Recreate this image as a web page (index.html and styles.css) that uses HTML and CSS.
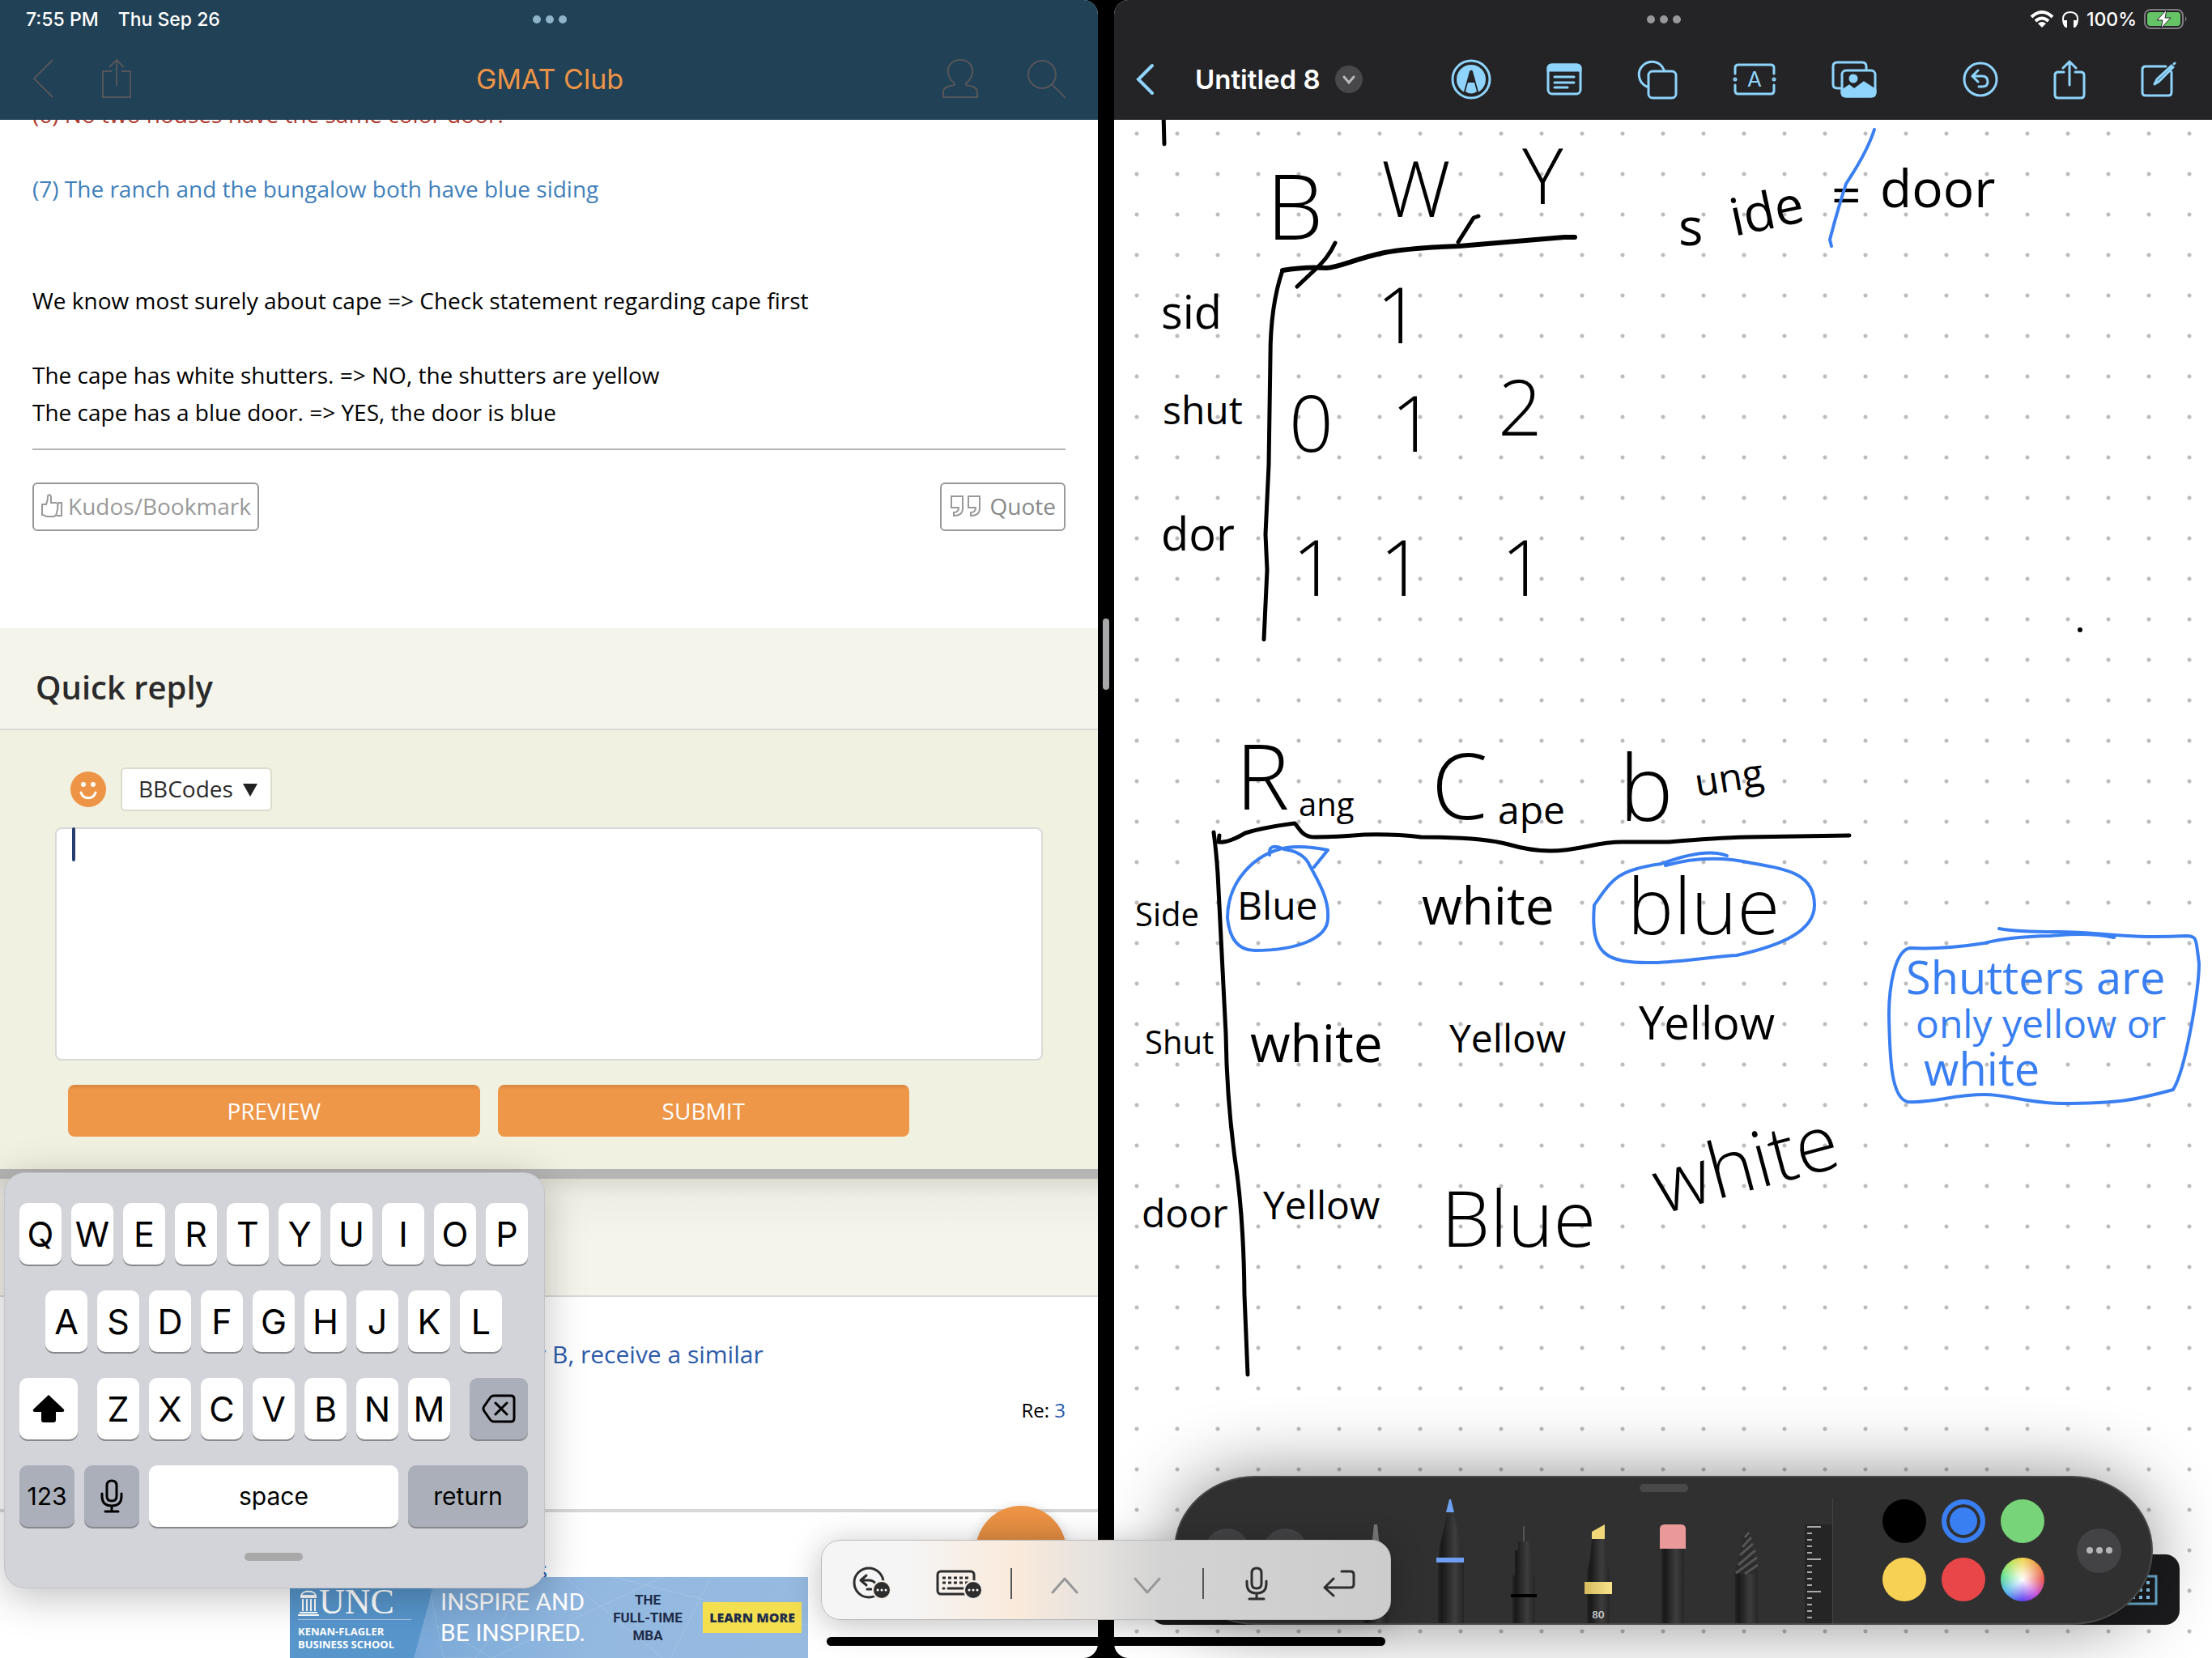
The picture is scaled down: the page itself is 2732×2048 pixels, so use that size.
FILE: index.html
```html
<!DOCTYPE html>
<html lang="en">
<head>
    <meta charset="UTF-8">
    <meta name="viewport" content="width=device-width, initial-scale=1.0">
    <title>GMAT Club</title>
    <link rel="stylesheet" href="styles.css">
</head>
<body>
    <section class="pane forum">
        <header class="bar forum-bar">
            <div class="status">
                <span class="status-left"><span>7:55 PM</span><span>Thu Sep 26</span></span>
                <span class="dots"><i></i><i></i><i></i></span>
                <span></span>
            </div>
            <nav class="forum-nav">
                <div class="nav-group">
                    <button class="icon-btn" aria-label="Back"><svg width="26" height="50" viewBox="0 0 26 50"><path d="M25 2L2 25L25 48"/></svg></button>
                    <button class="icon-btn" aria-label="Share"><svg width="36" height="50" viewBox="0 0 36 50"><path d="M12 16H1V48H35V16H24M18 34V2M9 11L18 2L27 11"/></svg></button>
                </div>
                <h1>GMAT Club</h1>
                <div class="nav-group nav-right">
                    <button class="icon-btn" aria-label="Profile"><svg width="44" height="50" viewBox="0 0 44 50"><path d="M22 2C11 2 6 10 7 18C8 25 11 28 15 31C18 35 2 32 1 41V48H43V41C42 32 26 35 29 31C33 28 36 25 37 18C38 10 33 2 22 2Z"/></svg></button>
                    <button class="icon-btn" aria-label="Search"><svg width="50" height="50" viewBox="0 0 50 50"><circle cx="19" cy="20" r="17"/><path d="M31 32L48 49"/></svg></button>
                </div>
            </nav>
        </header>

        <main class="thread">
            <article class="post">
                <p class="red">(6) No two houses have the same color door.</p>
                <p class="blue">(7) The ranch and the bungalow both have blue siding</p>
                <p class="lead">We know most surely about cape =&gt; Check statement regarding cape first</p>
                <p>The cape has white shutters. =&gt; NO, the shutters are yellow<br>The cape has a blue door. =&gt; YES, the door is blue</p>
                <hr>
                <div class="post-actions">
                    <button class="outline-btn"><svg width="28" height="30" viewBox="0 0 28 30"><path d="M2 13H7C9 9 9 7 9 3C9 0 13 1 13 4V11H19C22 11 22 14 21 15C22 17 21 18 21 19C21 21 20 22 20 23C20 27 18 28 15 28H8C6 28 5 26 2 26ZM22 11H26V27H20"/></svg>Kudos/Bookmark</button>
                    <button class="outline-btn quote"><svg width="40" height="28" viewBox="0 0 40 28"><path d="M2 2H16V17C16 23 12 26 5 26V22C9 22 11 20 11 16H2ZM23 2H37V17C37 23 33 26 26 26V22C30 22 32 20 32 16H23Z"/></svg>Quote</button>
                </div>
            </article>

            <section class="reply">
                <h2>Quick reply</h2>
                <form class="reply-form">
                    <div class="reply-tools">
                        <button type="button" class="smiley" aria-label="Smileys"><svg width="44" height="44" viewBox="0 0 44 44"><circle cx="22" cy="22" r="22" fill="#ee9446"/><circle cx="16" cy="16" r="3" fill="#fff"/><circle cx="28" cy="16" r="3" fill="#fff"/><path d="M13 26C16 35 28 35 31 26" fill="none" stroke="#fff" stroke-width="3" stroke-linecap="round"/></svg></button>
                        <div class="select-wrap">
                            <select aria-label="BBCodes"><option>BBCodes</option></select>
                            <svg class="arrow" width="18" height="16" viewBox="0 0 18 16"><path d="M0 0H18L9 16Z" fill="#222"/></svg>
                        </div>
                    </div>
                    <div class="message">
                        <textarea aria-label="Message"></textarea>
                        <span class="caret"></span>
                    </div>
                    <div class="reply-buttons">
                        <button type="button" class="orange-btn">PREVIEW</button>
                        <button type="submit" class="orange-btn">SUBMIT</button>
                    </div>
                </form>
            </section>

            <section class="similar">
                <div class="similar-head"></div>
                <div class="topic">
                    <a href="#">r B, receive a similar</a>
                    <div class="replies">Re: <a href="#">3</a></div>
                </div>
                <div class="topic last"><a href="#">s</a></div>
            </section>
        </main>

        <button class="fab" aria-label="New post"></button>

        <aside class="ad">
            <svg class="ad-lines" viewBox="0 0 640 100" preserveAspectRatio="none"><path d="M170 0L190 100L230 100L300 0ZM340 0L460 100M460 0L250 100M400 0L640 60M520 0L470 100M180 60L250 100" /></svg>
            <div class="ad-school">
                <div class="ad-logo"><svg width="26" height="34" viewBox="0 0 26 34"><path d="M4 9C5 2 21 2 22 9ZM3 11H23M6 13V28M11 13V28M16 13V28M21 13V28M2 30H24M0 33H26" fill="none" stroke="#fff" stroke-width="2"/></svg><b>UNC</b></div>
                <span>KENAN-FLAGLER<br>BUSINESS SCHOOL</span>
            </div>
            <div class="ad-slogan">INSPIRE AND<br>BE INSPIRED.</div>
            <div class="ad-mba">THE<br>FULL-TIME<br>MBA</div>
            <a class="ad-more" href="#">LEARN MORE</a>
        </aside>

        <div class="keyboard">
            <div class="keys"><button>Q</button><button>W</button><button>E</button><button>R</button><button>T</button><button>Y</button><button>U</button><button>I</button><button>O</button><button>P</button></div>
            <div class="keys"><button>A</button><button>S</button><button>D</button><button>F</button><button>G</button><button>H</button><button>J</button><button>K</button><button>L</button></div>
            <div class="keys spread">
                <button class="wide" aria-label="Shift"><svg width="40" height="36" viewBox="0 0 40 36"><path d="M20 1L39 19Q40 22 37 22H29V32Q29 35 26 35H14Q11 35 11 32V22H3Q0 22 1 19Z"/></svg></button>
                <span class="keys"><button>Z</button><button>X</button><button>C</button><button>V</button><button>B</button><button>N</button><button>M</button></span>
                <button class="wide grey" aria-label="Delete"><svg width="42" height="36" viewBox="0 0 42 36"><path d="M15 2H36Q40 2 40 6V30Q40 34 36 34H15Q12 34 10 31L3 21Q1 18 3 15L10 5Q12 2 15 2ZM17 11L31 25M31 11L17 25" fill="none" stroke="#000" stroke-width="3" stroke-linecap="round"/></svg></button>
            </div>
            <div class="keys">
                <button class="fn grey">123</button>
                <button class="fn grey" aria-label="Dictate"><svg width="28" height="42" viewBox="0 0 28 42"><path d="M14 2Q20 2 20 8V21Q20 27 14 27Q8 27 8 21V8Q8 2 14 2ZM2 18V21Q2 33 14 33Q26 33 26 21V18M14 33V40M6 40H22" fill="none" stroke="#000" stroke-width="3" stroke-linecap="round"/></svg></button>
                <button class="word space">space</button>
                <button class="word return grey">return</button>
            </div>
            <span class="grip"></span>
        </div>
    </section>

    <div class="divider"><span></span></div>

    <section class="pane notes">
        <header class="bar notes-bar">
            <div class="status">
                <span></span>
                <span class="dots"><i></i><i></i><i></i></span>
                <span class="status-right">
                    <svg width="30" height="22" viewBox="0 0 30 22"><path d="M2 8Q15 -4 28 8M7 13Q15 6 23 13" fill="none" stroke="#fff" stroke-width="4"/><path d="M10 16Q15 12 20 16L15 21Z" fill="#fff"/></svg>
                    <svg width="22" height="22" viewBox="0 0 22 22"><path d="M4 18Q2 15 2 11Q2 2 11 2Q20 2 20 11Q20 15 18 18" fill="none" stroke="#fff" stroke-width="2"/><path d="M3 12L7 12V21H5Q3 20 2 16ZM19 12L15 12V21H17Q19 20 20 16Z" fill="#fff"/></svg>
                    <span>100%</span>
                    <svg width="54" height="26" viewBox="0 0 54 26"><rect x="1" y="1" width="47" height="23" rx="7" fill="none" stroke="#7c7c7e" stroke-width="2"/><rect x="4" y="4" width="41" height="17" rx="4" fill="#65c466"/><path d="M51 9Q54 12 51 16Z" fill="#7c7c7e"/><path d="M28 1L16 14H23L21 24L33 11H26Z" fill="#fff" stroke="#242426" stroke-width="1"/></svg>
                </span>
            </div>
            <nav class="notes-nav">
                <button class="icon-btn" aria-label="Back"><svg width="24" height="40" viewBox="0 0 24 40"><path d="M21 3L4 20L21 37" stroke-width="4"/></svg></button>
                <h1>Untitled 8</h1>
                <button class="icon-btn more-title" aria-label="Rename"><svg width="34" height="34" viewBox="0 0 34 34"><circle cx="17" cy="17" r="17" fill="#48484b" stroke="none"/><path class="more-arrow" d="M11 14L17 21L23 14"/></svg></button>
                <div class="tools">
                    <button class="icon-btn" aria-label="Pen"><svg width="50" height="50" viewBox="0 0 50 50"><circle cx="25" cy="25" r="23"/><circle cx="25" cy="25" r="18" fill="#8ed4fc" stroke="none"/><path d="M15 44L23 15Q25 12 27 15L35 44Z" fill="#242426" stroke="none"/><path d="M18 40L21 29H29L32 40Q25 45 18 40Z" fill="#8ed4fc" stroke="none"/></svg></button>
                    <button class="icon-btn" aria-label="Note"><svg width="44" height="40" viewBox="0 0 44 40"><rect x="2" y="2" width="40" height="36" rx="5"/><path d="M2 9V6Q2 2 7 2H37Q42 2 42 6V9Z" fill="#8ed4fc"/><path d="M10 17H34M10 24H34M10 30H26"/></svg></button>
                    <button class="icon-btn" aria-label="Shape"><svg width="50" height="50" viewBox="0 0 50 50"><path d="M12 34A16 16 0 1 1 33 13"/><rect x="14" y="15" width="34" height="33" rx="5"/></svg></button>
                    <button class="icon-btn" aria-label="Text box"><svg width="54" height="40" viewBox="0 0 54 40"><path d="M3 13V6Q3 2 7 2H47Q51 2 51 6V13M3 27V34Q3 38 7 38H47Q51 38 51 34V27"/><circle cx="3" cy="20" r="1"/><circle cx="51" cy="20" r="1"/><text x="27" y="29" class="icon-text">A</text></svg></button>
                    <button class="icon-btn" aria-label="Photos"><svg width="56" height="46" viewBox="0 0 56 46"><path d="M12 34H7Q2 34 2 29V7Q2 2 7 2H38Q43 2 43 7V10"/><rect x="13" y="12" width="41" height="32" rx="5"/><circle cx="27" cy="22" r="4" fill="#8ed4fc"/><path d="M13 37L22 31L28 36L40 27L54 36V40Q54 44 49 44H18Q13 44 13 40Z" fill="#8ed4fc"/></svg></button>
                </div>
                <div class="tools">
                    <button class="icon-btn" aria-label="Undo"><svg width="44" height="44" viewBox="0 0 44 44"><circle cx="22" cy="22" r="20"/><path d="M19 11L12 18L19 25M12 18H24Q31 18 31 25Q31 31 24 31H20"/></svg></button>
                    <button class="icon-btn" aria-label="Share"><svg width="40" height="50" viewBox="0 0 40 50"><path d="M13 16H6Q2 16 2 20V44Q2 48 6 48H34Q38 48 38 44V20Q38 16 34 16H27M20 32V3M12 11L20 3L28 11"/></svg></button>
                    <button class="icon-btn" aria-label="New note"><svg width="44" height="44" viewBox="0 0 44 44"><path d="M31 6H6Q2 6 2 10V38Q2 42 6 42H34Q38 42 38 38V13M17 28L20 22L38 5M17 28L22 25L40 7M41 3L42 2"/></svg></button>
                </div>
            </nav>
        </header>

        <div class="canvas">
            <svg class="ink" viewBox="1376 148 1356 1900" preserveAspectRatio="xMinYMin slice">
                <path d="M1437 140L1438 178"/>

                <!-- colour counts -->
                <path class="rule" d="M1584 334Q1612 329 1638 331C1655 330 1672 320 1710 312Q1742 306 1802 304L1932 293H1945" />
                <path d="M1584 334Q1569 378 1569 440L1567 574L1563 660L1565 704L1561 790"/>
                <path d="M1649 300Q1640 320 1621 336L1602 354M1826 267L1820 269L1801 299"/>
                <text class="ink-xl" x="1564" y="296">B</text>
                <text class="ink-l" x="1706" y="268">W</text>
                <text class="ink-l" x="1880" y="252">Y</text>
                <text class="ink-m" x="2073" y="303">s</text>
                <text class="ink-m" x="2142" y="292" transform="rotate(-12 2142 292)">ide</text>
                <text class="ink-m" x="2262" y="264">=</text>
                <text class="ink-m" x="2322" y="256">door</text>
                <path class="marker" d="M2315 160Q2306 188 2280 227Q2269 261 2260 296L2262 304"/>
                <text class="ink-sm" x="1434" y="406">sid</text>
                <text class="ink-s" x="1436" y="524">shut</text>
                <text class="ink-sm" x="1434" y="680">dor</text>
                <text class="ink-l" x="1700" y="424">1</text>
                <text class="ink-l" x="1592" y="558">0</text>
                <text class="ink-l" x="1718" y="558">1</text>
                <text class="ink-l" x="1850" y="538">2</text>
                <text class="ink-l" x="1596" y="736">1</text>
                <text class="ink-l" x="1704" y="736">1</text>
                <text class="ink-l" x="1854" y="736">1</text>
                <circle cx="2569" cy="778" r="3"/>

                <!-- house table -->
                <path d="M1499 1028Q1502 1050 1504 1079L1514 1277Q1515 1354 1525 1430Q1536 1500 1537 1600L1541 1698"/>
                <path d="M1506 1032L1505 1040Q1516 1042 1538 1029Q1560 1022 1599 1017C1606 1024 1608 1034 1624 1034Q1650 1034 1685 1031Q1723 1030 1755 1034Q1830 1034 1863 1043Q1890 1051 1915 1051C1950 1051 1970 1040 2004 1040H2061Q2120 1035 2157 1034L2284 1032"/>
                <text class="ink-xl" x="1526" y="1000">R</text>
                <text class="ink-xs" x="1604" y="1008">ang</text>
                <text class="ink-xl" x="1768" y="1012">C</text>
                <text class="ink-s" x="1850" y="1018">ape</text>
                <text class="ink-xl" x="2000" y="1014">b</text>
                <text class="ink-s" x="2096" y="984" transform="rotate(-9 2096 984)">ung</text>
                <text class="ink-xs" x="1402" y="1144">Side</text>
                <text class="ink-s" x="1528" y="1136">Blue</text>
                <text class="ink-m" x="1756" y="1142">white</text>
                <text class="ink-l" x="2010" y="1154">blue</text>
                <text class="ink-xs" x="1414" y="1302">Shut</text>
                <text class="ink-m" x="1544" y="1312">white</text>
                <text class="ink-s" x="1790" y="1300">Yellow</text>
                <text class="ink-sm" x="2024" y="1284">Yellow</text>
                <text class="ink-s" x="1410" y="1516">door</text>
                <text class="ink-s" x="1560" y="1506">Yellow</text>
                <text class="ink-l" x="1780" y="1540">Blue</text>
                <text class="ink-l" x="2052" y="1500" transform="rotate(-15 2052 1500)">white</text>
                <path class="marker" d="M1623 1071L1640 1050Q1610 1044 1589 1047C1550 1054 1516 1088 1516 1134Q1520 1174 1550 1174C1600 1174 1640 1160 1640 1134C1642 1108 1624 1082 1616 1066Q1608 1052 1586 1049Q1566 1040 1568 1056"/>
                <path class="marker" d="M2133 1057C2110 1048 2076 1058 2052 1067C2000 1074 1992 1084 1969 1118C1964 1180 1984 1190 2042 1189C2080 1188 2110 1182 2145 1180C2200 1168 2241 1150 2241 1118C2241 1080 2210 1074 2163 1066Q2110 1054 2057 1069"/>

                <!-- side remark -->
                <path class="marker" d="M2611 1158C2583 1152 2556 1154 2533 1156Q2480 1157 2451 1165Q2400 1173 2359 1171C2340 1174 2333 1220 2333 1253C2334 1310 2336 1356 2356 1361C2390 1363 2410 1352 2451 1352C2480 1352 2500 1362 2545 1363C2620 1363 2640 1358 2684 1346C2700 1320 2716 1220 2716 1190C2712 1160 2714 1156 2700 1156C2620 1160 2600 1151 2540 1151Q2490 1151 2469 1147"/>
                <text class="remark ink-sm" x="2354" y="1228">Shutters are</text>
                <text class="remark ink-s" x="2366" y="1282">only yellow or</text>
                <text class="remark ink-sm" x="2376" y="1341">white</text>
            </svg>
        </div>

        <div class="dock"><svg width="60" height="38" viewBox="0 0 60 38"><rect x="2" y="2" width="56" height="34" fill="none" stroke="#6fb3d6" stroke-width="3"/><path d="M10 10H54M10 19H54M10 28H54" stroke="#8ed4fc" stroke-width="4" stroke-dasharray="4 5"/></svg></div>

        <div class="palette">
            <span class="palette-grip"></span>
            <button class="round" aria-label="Undo"></button>
            <button class="round" aria-label="Redo"></button>
            <div class="pens">
                <svg width="40" height="154" viewBox="0 0 40 154">
                    <defs>
                        <linearGradient id="barrel"><stop offset="0" stop-color="#252525"/><stop offset=".15" stop-color="#191919"/><stop offset=".65" stop-color="#3d3d3d"/><stop offset="1" stop-color="#262626"/></linearGradient>
                        <linearGradient id="gold"><stop offset="0" stop-color="#d5bb5d"/><stop offset="1" stop-color="#f8e38d"/></linearGradient>
                    </defs>
                    <path d="M18 32H22L25 60H15Z" fill="#777"/><path d="M15 60H25L35 105V154H5V105Z" fill="url(#barrel)"/>
                </svg>
                <svg width="40" height="154" viewBox="0 0 40 154"><path d="M17 16H23L35 60L37 80V154H5V80L7 60Z" fill="url(#barrel)"/><path d="M19 1H21L25 17H15Z" fill="#6ea1f0"/><rect x="3" y="73" width="34" height="6" fill="#6f9ff5"/></svg>
                <svg width="40" height="154" viewBox="0 0 40 154"><path d="M20 34V54" stroke="#777" stroke-width="1"/><path d="M13 53H27V64H31V95H34V154H6V95H9V64H13Z" fill="url(#barrel)"/><rect x="4" y="118" width="32" height="4" fill="#000"/></svg>
                <svg width="40" height="154" viewBox="0 0 40 154"><path d="M12 50H28L30 75L34 90V154H6V90L10 75Z" fill="url(#barrel)"/><path d="M12 50V41L28 32V50Z" fill="#efd77a"/><rect x="3" y="103" width="34" height="15" fill="url(#gold)"/><text x="20" y="148" class="pen-size">80</text></svg>
                <svg width="40" height="154" viewBox="0 0 40 154"><rect x="6" y="61" width="28" height="93" fill="url(#barrel)"/><path d="M4 62V38Q4 32 10 32H30Q36 32 36 38V62Z" fill="#e99a98"/></svg>
                <svg width="40" height="154" viewBox="0 0 40 154"><rect x="6" y="92" width="28" height="62" fill="url(#barrel)"/><path d="M20 32L35 93H5Z" fill="#2b2b2b"/><path d="M18 48L23 42M15 60L26 48M12 70L28 56M10 82L31 64M7 92L33 73M18 93L34 82" stroke="#555" stroke-width="3"/></svg>
                <svg class="ruler" width="34" height="154" viewBox="0 0 34 154"><rect y="32" width="34" height="122" fill="#252525"/><path d="M3 35H20M3 75H20M3 115H20" stroke="#aaa" stroke-width="2"/><path d="M3 43H9M3 51H9M3 59H9M3 67H9M3 83H9M3 91H9M3 99H9M3 107H9M3 123H9M3 131H9M3 139H9M3 147H9" stroke="#aaa" stroke-width="2"/></svg>
            </div>
            <div class="swatches">
                <button class="black" aria-label="Black"></button>
                <button class="azure" aria-label="Blue"></button>
                <button class="green" aria-label="Green"></button>
                <button class="yellow" aria-label="Yellow"></button>
                <button class="crimson" aria-label="Red"></button>
                <button class="wheel" aria-label="More colors"></button>
            </div>
            <button class="round more" aria-label="More"><i></i><i></i><i></i></button>
        </div>
    </section>

    <div class="shortcuts">
        <div class="shortcut-group undo-group">
            <button aria-label="Undo"><svg width="50" height="42" viewBox="0 0 50 42"><circle cx="20" cy="20" r="18"/><path d="M17 11L10 17L17 23M10 17H20Q26 17 28 21M18 28H23"/><circle cx="36" cy="29" r="11" class="badge"/><path class="badge-dots" d="M31 29H31M36 29H36M41 29H41"/></svg></button>
            <button aria-label="Keyboard"><svg width="58" height="42" viewBox="0 0 58 42"><rect x="2" y="6" width="45" height="28" rx="4"/><path class="key-rows" d="M8 14H42M8 20H42"/><path d="M9 27H10M15 27H34"/><circle cx="46" cy="29" r="11" class="badge"/><path class="badge-dots" d="M41 29H41M46 29H46M51 29H51"/></svg></button>
        </div>
        <div class="shortcut-group field-group">
            <button class="dim" aria-label="Previous field"><svg width="34" height="28" viewBox="0 0 34 28"><path d="M2 25L17 8L32 25"/></svg></button>
            <button class="dim" aria-label="Next field"><svg width="34" height="28" viewBox="0 0 34 28"><path d="M2 8L17 25L32 8"/></svg></button>
        </div>
        <div class="shortcut-group">
            <button aria-label="Dictate"><svg width="28" height="42" viewBox="0 0 28 42"><path d="M14 2Q20 2 20 8V21Q20 27 14 27Q8 27 8 21V8Q8 2 14 2ZM2 18V21Q2 33 14 33Q26 33 26 21V18M14 33V40M5 40H23"/></svg></button>
            <button aria-label="Return"><svg width="40" height="34" viewBox="0 0 40 34"><path d="M23 2H34Q38 2 38 6V18Q38 22 34 22H3M13 11L2 22L13 32"/></svg></button>
        </div>
    </div>
    <div class="home-indicator"></div>
</body>
</html>
```

FILE: styles.css
```css
* {
    box-sizing: border-box;
}
body {
    position: relative;
    display: flex;
    height: 100vh;
    margin: 0;
    background-color: #000;
    font-family: 'Open Sans', sans-serif;
    font-size: 28px;
    color: #000;
    overflow: hidden;
}
button, select, textarea {
    font: inherit;
    border: none;
    margin: 0;
    padding: 0;
}
button {
    cursor: pointer;
}
a {
    color: #2c5ba9;
    text-decoration: none;
}
svg {
    display: block;
}
.pane {
    position: relative;
    flex: 1;
    min-width: 0;
    display: flex;
    flex-direction: column;
    background-color: #fff;
    overflow: hidden;
}
.forum {
    border-radius: 0 18px 18px 0;
}
.notes {
    border-radius: 18px 0 0 18px;
}
.divider {
    width: 20px;
    display: flex;
    justify-content: center;
    padding-top: 764px;
}
.divider span {
    width: 8px;
    height: 88px;
    border-radius: 4px;
    background-color: #a8a8aa;
}

/* bars */
.bar {
    flex: none;
    height: 148px;
    font-family: Inter, sans-serif;
}
.forum-bar {
    background-color: #204156;
    color: #fff;
}
.notes-bar {
    background-color: #242426;
    color: #fff;
}
.status {
    display: grid;
    grid-template-columns: 1fr auto 1fr;
    align-items: center;
    height: 48px;
    padding: 0 30px 0 32px;
    font-size: 23px;
    font-weight: 500;
}
.status-left {
    display: flex;
    gap: 24px;
}
.status-right {
    display: flex;
    justify-content: flex-end;
    align-items: center;
    gap: 9px;
}
.dots {
    display: flex;
    gap: 6px;
}
.dots i {
    width: 10px;
    height: 10px;
    border-radius: 50%;
    background-color: #8fb3c9;
}
.notes .dots i {
    background-color: #98989a;
}
.icon-btn {
    background: none;
}
.icon-btn svg {
    fill: none;
    stroke: #8ed4fc;
    stroke-width: 3px;
    stroke-linecap: round;
}
.forum .icon-btn svg {
    stroke: #56565a;
    stroke-width: 2px;
    stroke-linecap: butt;
}
.bar h1 {
    margin: 0;
    font-size: 34px;
}
.forum-nav {
    display: grid;
    grid-template-columns: 1fr auto 1fr;
    align-items: center;
    height: 98px;
    padding: 0 38px 0 40px;
}
.forum-nav h1 {
    color: #ee9446;
    font-weight: 400;
}
.nav-group {
    display: flex;
    gap: 60px;
}
.nav-right {
    justify-content: flex-end;
}
.notes-nav {
    display: flex;
    align-items: center;
    height: 100px;
    padding: 0 44px 0 26px;
}
.notes-nav h1 {
    margin-left: 50px;
    font-size: 33px;
    font-weight: 600;
}
.more-title {
    margin: 0 auto 0 18px;
}
.icon-btn .more-arrow {
    stroke: #b9b9bd;
}
.tools {
    display: flex;
    align-items: center;
    gap: 68px;
}
.tools + .tools {
    margin-left: 106px;
}
.icon-text {
    font: 400 26px Inter, sans-serif;
    fill: #8ed4fc;
    stroke: none;
    text-anchor: middle;
}

/* thread */
.thread {
    flex: 1;
    min-height: 0;
    overflow: hidden;
}
.post {
    margin-top: -30px;
    padding: 0 40px 120px;
    line-height: 46px;
}
.post p {
    margin: 0 0 46px;
}
.post .red {
    color: #b03a2e;
}
.post .blue {
    margin-bottom: 92px;
    color: #3f7fba;
}
.post p:last-of-type {
    margin: 0;
}
.post hr {
    margin: 22px 0 40px;
    border: none;
    border-top: 2px solid #b4b4b4;
}
.post-actions {
    display: flex;
    justify-content: space-between;
}
.outline-btn {
    display: flex;
    align-items: center;
    gap: 6px;
    height: 60px;
    padding: 0 8px 2px;
    background-color: #fff;
    border: 2px solid #999;
    border-radius: 6px;
    color: #999;
}
.outline-btn svg {
    fill: none;
    stroke: #999;
    stroke-width: 2px;
}
.quote {
    gap: 10px;
    padding: 0 10px 2px;
    color: #888;
}
.reply {
    background-color: #f1f1e1;
}
.reply h2 {
    margin: 0;
    padding: 45px 44px 23px;
    height: 126px;
    background-color: #f5f4eb;
    border-bottom: 2px solid #d9d9d9;
    font-size: 40px;
    line-height: 56px;
    font-weight: 600;
    color: #2b2b2b;
}
.reply-form {
    padding: 46px 68px 40px;
    border-bottom: 12px solid #b5b5b5;
}
.reply-tools {
    display: flex;
    align-items: center;
    gap: 18px;
    padding-left: 19px;
}
.smiley {
    background: none;
}
.select-wrap {
    position: relative;
}
.select-wrap select {
    appearance: none;
    height: 54px;
    padding: 0 46px 2px 20px;
    background-color: #fff;
    border: 2px solid #dddccb;
    border-radius: 6px;
    color: #2b2b2b;
}
.arrow {
    position: absolute;
    right: 18px;
    top: 20px;
}
.message {
    position: relative;
    margin: 20px 0 30px;
}
.message textarea {
    display: block;
    width: 100%;
    height: 288px;
    padding: 0 20px;
    border: 2px solid #d9d9d9;
    border-radius: 8px;
    resize: none;
}
.caret {
    position: absolute;
    left: 21px;
    top: 0;
    width: 4px;
    height: 42px;
    border-radius: 2px;
    background-color: #25406f;
}
.reply-buttons {
    display: flex;
    gap: 22px;
    padding: 0 165px 0 16px;
}
.orange-btn {
    flex: 1;
    height: 64px;
    border-radius: 8px;
    background: linear-gradient(#d8853e, #ee9748 6px);
    color: #fff;
    font-size: 28px;
}
.similar-head {
    height: 146px;
    background: linear-gradient(#dcdbd2, #efeee5 24px, #f5f4eb 70px);
    border-bottom: 2px solid #d9d9d9;
}
.topic {
    height: 266px;
    padding: 48px 40px 0 662px;
    border-bottom: 4px solid #d8d8d8;
    font-size: 30px;
    line-height: 46px;
}
.topic.last {
    border: none;
}
.replies {
    margin-top: 23px;
    text-align: right;
    font-size: 24px;
}
.fab {
    position: absolute;
    right: 39px;
    bottom: 76px;
    width: 112px;
    height: 112px;
    border-radius: 50%;
    background: linear-gradient(#ee9446, #d9873f 60px);
    box-shadow: 0 4px 16px rgba(0, 0, 0, 0.2);
}

/* advert */
.ad {
    position: absolute;
    left: 358px;
    bottom: 0;
    width: 640px;
    height: 100px;
    display: flex;
    align-items: center;
    background: linear-gradient(105deg, #5795cb 27%, #7ba9d8 27%, #94b9e0 60%, #96bae0);
    color: #fff;
}
.ad-lines {
    position: absolute;
    inset: 0;
    width: 100%;
    height: 100%;
    fill: none;
    stroke: rgba(255, 255, 255, 0.15);
    stroke-width: 1px;
}
.ad-school {
    width: 186px;
    padding-left: 10px;
    font-size: 13px;
    font-weight: 700;
    line-height: 16px;
    white-space: nowrap;
}
.ad-logo {
    display: flex;
    align-items: center;
    width: 140px;
    border-bottom: 1px solid #a5c6e4;
    margin-bottom: 6px;
}
.ad-logo b {
    font: 400 44px/42px 'Liberation Serif', serif;
}
.ad-slogan {
    width: 198px;
    font-family: Roboto, sans-serif;
    font-size: 30px;
    line-height: 38px;
    white-space: nowrap;
}
.ad-mba {
    width: 116px;
    text-align: center;
    font-family: Roboto, sans-serif;
    font-size: 17px;
    font-weight: 700;
    line-height: 22px;
    color: #1d2b4a;
    white-space: nowrap;
}
.ad-more {
    margin: 0 8px 0 auto;
    padding: 0 8px;
    background-color: #f4df4e;
    color: #1d2b4a;
    font-size: 16px;
    font-weight: 800;
    line-height: 38px;
    white-space: nowrap;
}

/* floating keyboard */
.keyboard {
    position: absolute;
    left: 5px;
    bottom: 86px;
    display: flex;
    flex-direction: column;
    gap: 32px;
    width: 668px;
    height: 514px;
    padding: 37px 20px 0 18px;
    border: 1px solid #c2c3c8;
    border-radius: 26px;
    background-color: #d2d4da;
    box-shadow: 0 10px 50px rgba(0, 0, 0, 0.25);
    font-family: Inter, sans-serif;
}
.keys {
    display: flex;
    justify-content: center;
    gap: 12px;
}
.keys.spread {
    justify-content: space-between;
}
.keys button {
    display: flex;
    align-items: center;
    justify-content: center;
    width: 52px;
    height: 76px;
    border-radius: 10px;
    background-color: #fff;
    box-shadow: 0 2px 0 #86888c;
    color: #000;
    font-size: 43px;
}
.keys .wide {
    width: 72px;
}
.keys .fn {
    width: 68px;
    font-size: 30px;
}
.keys .word {
    font-size: 30px;
}
.keys .space {
    width: 308px;
}
.keys .return {
    width: 148px;
}
.keys .grey {
    background-color: #abafba;
}
.grip {
    align-self: center;
    width: 72px;
    height: 10px;
    border-radius: 5px;
    background-color: #a8a8a9;
}

/* note canvas */
.canvas {
    flex: 1;
    min-height: 0;
    background: radial-gradient(circle at center, #bcbcbc 2px, transparent 3px) 3px -8px / 50px 50px;
}
.ink {
    width: 100%;
    height: 100%;
}
.ink path {
    fill: none;
    stroke: #000;
    stroke-width: 5px;
    stroke-linecap: round;
    stroke-linejoin: round;
}
.ink .rule {
    stroke-width: 6px;
}
.ink .marker {
    stroke: #3a7ff2;
    stroke-width: 4px;
}
.ink .remark {
    fill: #3a7ff2;
}
.ink-xs {
    font-size: 40px;
}
.ink-s {
    font-size: 48px;
}
.ink-sm {
    font-size: 56px;
}
.ink-m {
    font-size: 64px;
}
.ink-l {
    font-size: 96px;
}
.ink-xl {
    font-size: 112px;
}
.ink-l, .ink-xl {
    font-weight: 300;
}

/* drawing tools */
.dock {
    position: absolute;
    left: 45px;
    right: 40px;
    bottom: 41px;
    height: 87px;
    padding: 25px 27px 0 0;
    border-radius: 18px;
    background-color: #1c1c1e;
    display: flex;
    justify-content: flex-end;
}
.palette {
    position: absolute;
    left: 74px;
    right: 73px;
    bottom: 41px;
    display: flex;
    align-items: center;
    height: 184px;
    padding: 0 37px 0 36px;
    border: 2px solid #474849;
    border-radius: 100px / 92px;
    background-color: #303030;
    box-shadow: 0 0 90px rgba(0, 0, 0, 0.45);
}
.palette-grip {
    position: absolute;
    left: 50%;
    top: 8px;
    width: 60px;
    height: 10px;
    margin-left: -30px;
    border-radius: 5px;
    background-color: #48484b;
}
.round {
    display: flex;
    align-items: center;
    justify-content: center;
    gap: 4px;
    width: 55px;
    height: 55px;
    border-radius: 50%;
    background-color: #434346;
}
.round + .round {
    margin-left: 17px;
}
.round i {
    width: 8px;
    height: 8px;
    border-radius: 50%;
    background-color: #b5b5b7;
}
.pens {
    flex: 1;
    align-self: flex-end;
    display: flex;
    justify-content: space-between;
    margin-left: 64px;
    border-right: 1px solid #454545;
}
.pen-size {
    font: 600 12px Inter, sans-serif;
    fill: #ccc;
    text-anchor: middle;
}
.swatches {
    display: grid;
    grid-template-columns: repeat(3, 54px);
    gap: 18px 19px;
    margin: 0 40px 0 61px;
}
.swatches button {
    height: 54px;
    border-radius: 50%;
}
.swatches .black {
    background-color: #000;
}
.swatches .azure {
    background-color: #3a7ff2;
    border: 6px solid #3a7ff2;
    box-shadow: inset 0 0 0 4px #303030;
}
.swatches .green {
    background-color: #78d479;
}
.swatches .yellow {
    background-color: #f7d154;
}
.swatches .crimson {
    background-color: #e94649;
}
.swatches .wheel {
    background: radial-gradient(circle, #fff, transparent 70%), conic-gradient(#efd44a, #e8524a 25%, #c34ad8 38%, #5a3cf0 50%, #52b5e8 65%, #5fe08a 78%, #b5e35a 90%, #efd44a);
}

/* shortcut bar */
.shortcuts {
    position: absolute;
    left: 1014px;
    bottom: 47px;
    display: flex;
    align-items: center;
    width: 704px;
    height: 99px;
    padding: 8px 0 0 38px;
    border: 1px solid #bbb;
    border-radius: 24px;
    background: linear-gradient(90deg, #f5f5f5 15%, #faeadb 34%, #e5e2df 48%, #d3d3d3 60%, #cccccc);
    box-shadow: 0 6px 40px rgba(0, 0, 0, 0.25);
}
.shortcut-group {
    display: flex;
    align-items: center;
    gap: 68px;
    height: 38px;
}
.undo-group {
    gap: 53px;
    padding-right: 34px;
}
.field-group {
    margin-right: 51px;
    padding: 0 51px 0 48px;
    border: solid #555;
    border-width: 0 2px;
}
.shortcuts button {
    background: none;
}
.shortcuts svg {
    fill: none;
    stroke: #2d2d2d;
    stroke-width: 3px;
    stroke-linecap: round;
    stroke-linejoin: round;
}
.shortcuts .dim svg {
    stroke: #979797;
}
.shortcuts .key-rows {
    stroke-linecap: butt;
    stroke-dasharray: 4 3;
}
.shortcuts .badge {
    fill: #2d2d2d;
    stroke: #f3ede8;
    stroke-width: 2px;
}
.shortcuts .badge-dots {
    stroke: #fff;
}
.home-indicator {
    position: absolute;
    left: 1021px;
    bottom: 15px;
    width: 690px;
    height: 11px;
    border-radius: 6px;
    background-color: #000;
}
```
